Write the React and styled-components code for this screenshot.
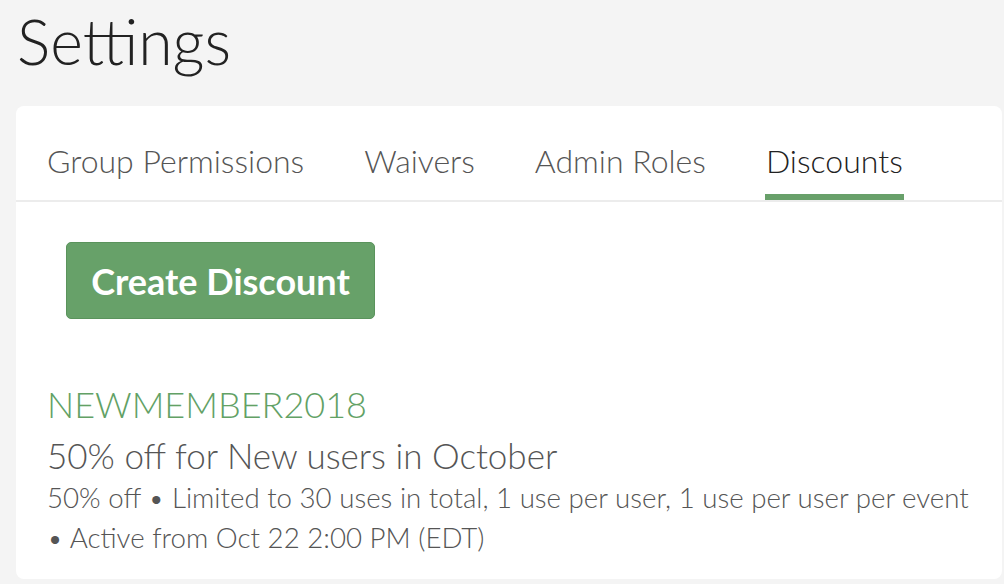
import React from "react";
import styled, { createGlobalStyle } from "styled-components";

const Global = createGlobalStyle`
  html, body { margin: 0; padding: 0; background: #f4f4f4; }
  body { font-family: Lato, "Open Sans", sans-serif; }
`;

const Page = styled.div`
  padding: 0 2px 5px 16px;
  box-sizing: border-box;
  width: 1004px;
  height: 584px;
`;

const Title = styled.h1`
  margin: 0;
  padding: 5px 0 0 1px;
  height: 106px;
  box-sizing: border-box;
  font-weight: 300;
  font-size: 62.5px;
  line-height: 72px;
  color: #222;
`;

const Card = styled.div`
  background: #fff;
  border-radius: 8px;
  height: 473px;
`;

const TabBar = styled.div`
  display: flex;
  align-items: flex-end;
  height: 94px;
  padding-left: 1px;
  border-bottom: 2px solid #ececec;
`;

const Tab = styled.div`
  margin: 0 29px;
  padding: 0 1px 15px;
  font-size: 32px;
  font-weight: 300;
  line-height: 36px;
  color: ${p => (p.$active ? "#222" : "#555")};
  border-bottom: 6px solid ${p => (p.$active ? "#68a06a" : "transparent")};
  cursor: pointer;
`;

const Body = styled.div`
  padding: 40px 31px 0 31px;
`;

const Button = styled.button`
  display: block;
  margin-left: 19px;
  width: 309px;
  height: 77px;
  background: #67a169;
  border: 1px solid #5a935c;
  border-radius: 5px;
  color: #fff;
  font-family: Lato, sans-serif;
  font-weight: 700;
  font-size: 36px;
  padding: 0;
`;

const Discount = styled.div`
  margin-top: 63px;
`;

const Code = styled.div`
  font-size: 36px;
  font-weight: 300;
  color: #62a165;
  line-height: 44px;
  margin-bottom: 6px;
`;

const Name = styled.div`
  font-size: 35px;
  font-weight: 300;
  color: #555;
  line-height: 46px;
`;

const Detail = styled.div`
  font-size: 27.7px;
  font-weight: 300;
  color: #555;
  line-height: 40px;
`;

export default function App() {
  return (
    <>
      <Global />
      <Page>
        <Title>Settings</Title>
        <Card>
          <TabBar>
            <Tab>Group Permissions</Tab>
            <Tab>Waivers</Tab>
            <Tab>Admin Roles</Tab>
            <Tab $active>Discounts</Tab>
          </TabBar>
          <Body>
            <Button>Create Discount</Button>
            <Discount>
              <Code>NEWMEMBER2018</Code>
              <Name>50% off for New users in October</Name>
              <Detail>
                50% off • Limited to 30 uses in total, 1 use per user, 1 use per user per event
                <br />• Active from Oct 22 2:00 PM (EDT)
              </Detail>
            </Discount>
          </Body>
        </Card>
      </Page>
    </>
  );
}
